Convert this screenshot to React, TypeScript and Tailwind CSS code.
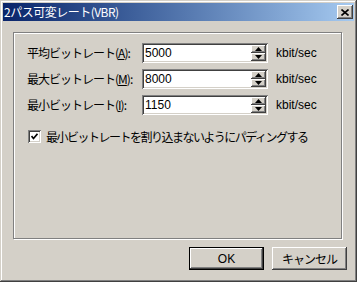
import React from 'react';

const jp = { fontFamily: '"Noto Sans CJK JP", "Noto Sans", sans-serif' };
const lat = { fontFamily: '"Liberation Sans", Arial, sans-serif' };

const raised =
  'shadow-[inset_-1px_-1px_#404040,inset_1px_1px_#ffffff,inset_-2px_-2px_#808080,inset_2px_2px_#d4d0c8]';
const sunken =
  'shadow-[inset_1px_1px_#808080,inset_-1px_-1px_#ffffff,inset_2px_2px_#404040,inset_-2px_-2px_#d4d0c8]';

const Arrow = ({ up }: { up?: boolean }) => (
  <svg width="7" height="4" viewBox="0 0 7 4">
    <path d={up ? 'M3.5 0 L7 4 L0 4 Z' : 'M0 0 L7 0 L3.5 4 Z'} fill="#000" />
  </svg>
);

const SpinRow = ({ label, accel, value }: { label: string; accel: string; value: string }) => (
  <div className="flex items-center h-[20px]">
    <div className="w-[115px] text-[12px] tracking-[-1px] text-black leading-none" style={jp}>
      {label}(<span className="underline">{accel}</span>):
    </div>
    <div className={`flex items-center w-[126px] h-[20px] bg-white p-[2px] ${sunken}`}>
      <div className="flex-1 text-[12px] leading-none pl-[1px] text-black" style={lat}>
        {value}
      </div>
      <div className="flex flex-col w-[15px] h-[16px]">
        <div className={`flex-1 flex items-center justify-center bg-[#d4d0c8] ${raised}`}>
          <Arrow up />
        </div>
        <div className={`flex-1 flex items-center justify-center bg-[#d4d0c8] ${raised}`}>
          <Arrow />
        </div>
      </div>
    </div>
    <div className="ml-[8px] text-[12px] text-black leading-none" style={lat}>
      kbit/sec
    </div>
  </div>
);

export default function App() {
  return (
    <div
      className={`w-[357px] h-[282px] bg-[#d4d0c8] p-[3px] flex flex-col shadow-[inset_-1px_-1px_#404040,inset_1px_1px_#d4d0c8,inset_-2px_-2px_#808080,inset_2px_2px_#ffffff]`}
    >
      {/* Title bar */}
      <div className="h-[18px] flex items-center bg-gradient-to-r from-[#0a246a] to-[#a6caf0] pl-[1px] pr-[1px]">
        <div className="flex-1 text-white text-[12px] tracking-[-0.5px] leading-none" style={jp}>
          2パス可変レート(VBR)
        </div>
        <div className={`w-[16px] h-[14px] flex items-center justify-center bg-[#d4d0c8] ${raised}`}>
          <svg width="8" height="7" viewBox="0 0 8 7">
            <path d="M0.5 0.5 L7.5 6.5 M7.5 0.5 L0.5 6.5" stroke="#000" strokeWidth="1.6" />
          </svg>
        </div>
      </div>

      {/* Body */}
      <div className="flex flex-col px-[10px] pt-[11px]">
        <div className="w-[329px] h-[207px] border border-[#808080] shadow-[1px_1px_0_#ffffff,inset_1px_1px_0_#ffffff] pl-[13px] pt-[10px] flex flex-col">
          <div className="flex flex-col gap-[6px]">
            <SpinRow label="平均ビットレート" accel="A" value="5000" />
            <SpinRow label="最大ビットレート" accel="M" value="8000" />
            <SpinRow label="最小ビットレート" accel="I" value="1150" />
          </div>
          <div className="flex items-center mt-[15px] ml-[1px]">
            <div className={`w-[13px] h-[13px] bg-white flex items-center justify-center ${sunken}`}>
              <svg width="7" height="7" viewBox="0 0 7 7">
                <path d="M0.5 3 L2.5 5.5 L6.5 0.8" stroke="#000" strokeWidth="1.7" fill="none" />
              </svg>
            </div>
            <div className="ml-[5px] text-[12px] tracking-[-1.5px] text-black leading-none" style={jp}>
              最小ビットレートを割り込まないようにパディングする
            </div>
          </div>
        </div>

        {/* Buttons */}
        <div className="flex justify-end gap-[8px] mt-[8px] mr-[-3px]">
          <button
            className="w-[75px] h-[23px] bg-[#d4d0c8] border border-black shadow-[inset_-1px_-1px_#404040,inset_1px_1px_#ffffff,inset_-2px_-2px_#808080] text-[12px] text-black"
            style={lat}
          >
            OK
          </button>
          <button
            className={`w-[75px] h-[23px] bg-[#d4d0c8] ${raised} text-[12px] tracking-[-1px] text-black`}
            style={jp}
          >
            キャンセル
          </button>
        </div>
      </div>
    </div>
  );
}
